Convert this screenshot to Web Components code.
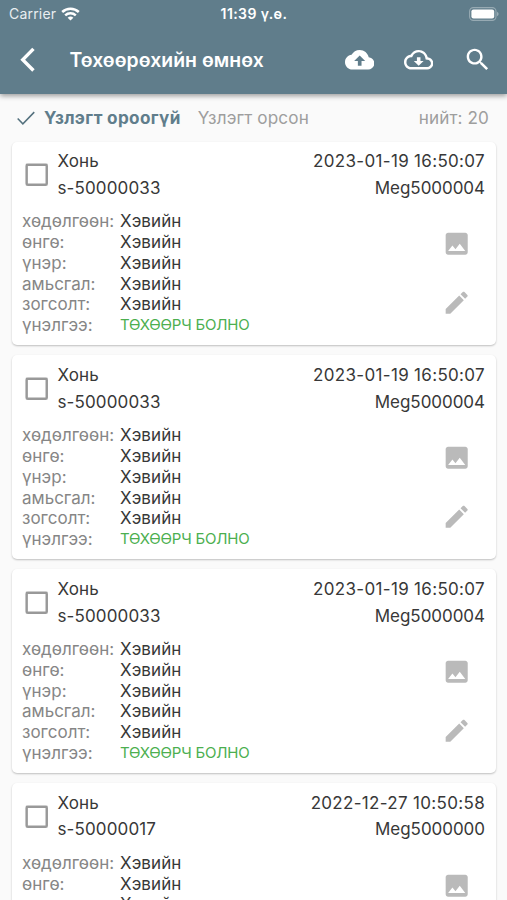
<!DOCTYPE html>
<html lang="mn">
<head>
<meta charset="utf-8">
<meta name="viewport" content="width=device-width, initial-scale=1">
<title>Төхөөрөхийн өмнөх</title>
<style>
    html, body {
        margin: 0;
        height: 100%;
        overflow: hidden;
        background: #fafafa;
        font-family: Inter, "Liberation Sans", sans-serif;
    }
</style>
</head>
<body>
<inspection-page></inspection-page>

<script>
const ICONS = {
    upload: "M19.35 10.04C18.67 6.59 15.64 4 12 4 9.11 4 6.6 5.64 5.35 8.04 2.34 8.36 0 10.91 0 14c0 3.31 2.69 6 6 6h13c2.76 0 5-2.24 5-5 0-2.64-2.05-4.78-4.65-4.96zM13.5 13v4h-3v-4H7.5l4.5-4.5 4.5 4.5h-3z",
    download: "M19.35 10.04C18.67 6.59 15.64 4 12 4 9.11 4 6.6 5.64 5.35 8.04 2.34 8.36 0 10.91 0 14c0 3.31 2.69 6 6 6h13c2.76 0 5-2.24 5-5 0-2.64-2.05-4.78-4.65-4.96zM19 18H6c-2.21 0-4-1.79-4-4 0-2.05 1.53-3.76 3.56-3.97l1.07-.11.5-.95C8.08 7.14 9.94 6 12 6c2.62 0 4.88 1.86 5.39 4.43l.3 1.5 1.53.11C20.78 12.14 22 13.45 22 15c0 1.65-1.35 3-3 3zm-5.55-8h-2.9v3H8l4 4 4-4h-2.55v-3z",
    search: "M15.5 14h-.79l-.28-.27C15.41 12.59 16 11.11 16 9.5 16 5.91 13.09 3 9.5 3S3 5.91 3 9.5 5.91 16 9.5 16c1.61 0 3.09-.59 4.23-1.57l.27.28v.79l5 4.99L20.49 19l-4.99-5zm-6 0C7.01 14 5 11.99 5 9.5S7.01 5 9.5 5 14 7.01 14 9.5 11.99 14 9.5 14z",
    back: "M17.7 4.1 15.7 2.2 6 12l9.7 9.8 2-1.9L9.9 12z",
    check: "M8.6 17.1 3.5 12l-1.2 1.2 6.3 6.3L21.6 6.2 20.4 5z",
    image: "M21 19V5c0-1.1-.9-2-2-2H5c-1.1 0-2 .9-2 2v14c0 1.1.9 2 2 2h14c1.1 0 2-.9 2-2zM8.5 13.5l2.5 3.01L14.5 12l4.5 6H5l3.5-4.5z",
    edit: "M3 17.25V21h3.75L17.81 9.94l-3.75-3.75L3 17.25zM20.71 7.04c.39-.39.39-1.02 0-1.41l-2.34-2.34c-.39-.39-1.02-.39-1.41 0l-1.83 1.83 3.75 3.75 1.83-1.83z",
    box: "M19.2 4.8v14.4H4.8V4.8h14.4m0-2H4.8l-1.6.2-.4 1.8v14.4l.4 1.6 1.6.4h14.4l1.6-.4.4-1.6V4.8L20.8 3z"
};

class AppIcon extends HTMLElement {
    constructor () {
        super();
        this.attachShadow({mode: "open"});
    }

    connectedCallback () {
        this.shadowRoot.innerHTML = `
        <style>
            :host { display: block; flex: none; width: 29.4px; height: 29.4px; }
            svg { display: block; width: 100%; height: 100%; fill: currentColor; }
        </style>
        <svg viewBox="0 0 24 24"><path d="${ICONS[this.getAttribute("name")]}"/></svg>
        `;
    }
}

class StatusBar extends HTMLElement {
    constructor () {
        super();
        this.attachShadow({mode: "open"});
        this.shadowRoot.innerHTML = `
        <style>
            :host {
                display: grid;
                grid-template-columns: 1fr auto 1fr;
                align-items: center;
                height: 26px;
                padding: 1px 8px 0 9px;
                box-sizing: border-box;
                color: #fff;
                font-size: 14px;
                line-height: 17px;
            }
            .left { display: flex; align-items: center; gap: 5px; color: #e9eef1; letter-spacing: .2px; }
            .time { font-size: 14px; font-weight: 600; letter-spacing: .4px; }
            svg { display: block; }
            .battery { justify-self: end; }
        </style>
        <div class="left">
            <span>Carrier</span>
            <svg width="19" height="14" viewBox="0 0 19 14" fill="none" stroke="#fff" stroke-width="2.5">
                <path d="M1.2 5a12 12 0 0 1 16.6 0M4.2 8.4a7.8 7.8 0 0 1 10.6 0"/>
                <path d="M9.5 13.6 6.6 10.8a4.2 4.2 0 0 1 5.8 0z" fill="#fff" stroke="none"/>
            </svg>
        </div>
        <span class="time">11:39 ү.ө.</span>
        <svg class="battery" width="30" height="14" viewBox="0 0 30 14">
            <rect x=".6" y=".6" width="26.4" height="12.8" rx="3.8" fill="none" stroke="#fff" stroke-opacity=".35" stroke-width="1.1"/>
            <rect x="2.4" y="2.4" width="22.8" height="9.2" rx="2.1" fill="#fff"/>
            <path d="M28.2 4.8v4.4c1.8-.7 1.8-3.7 0-4.4z" fill="#fff" fill-opacity=".45"/>
        </svg>
        `;
    }
}

class AppHeader extends HTMLElement {
    constructor () {
        super();
        this.attachShadow({mode: "open"});
        this.shadowRoot.innerHTML = `
        <style>
            :host {
                display: block;
                position: relative;
                height: 93.5px;
                background: #607d8b;
                color: #fff;
                box-shadow: 0 2px 5px rgba(0, 0, 0, .38);
            }
            .bar { display: flex; align-items: center; height: 67.5px; padding: 0 15px 0 13px; }
            h1 { flex: 1; margin: 0 0 0 27px; font-size: 19.4px; line-height: 24px; font-weight: 600; letter-spacing: .05px; white-space: nowrap; }
            .actions { display: flex; gap: 29.4px; }
        </style>
        <status-bar></status-bar>
        <div class="bar">
            <app-icon name="back"></app-icon>
            <h1><slot></slot></h1>
            <div class="actions">
                <app-icon name="upload"></app-icon>
                <app-icon name="download"></app-icon>
                <app-icon name="search"></app-icon>
            </div>
        </div>
        `;
    }
}

class FilterTabs extends HTMLElement {
    constructor () {
        super();
        this.attachShadow({mode: "open"});
        this.shadowRoot.innerHTML = `
        <style>
            :host {
                display: flex;
                align-items: center;
                height: 48px;
                padding: 0 18px 0 15px;
                color: #9e9e9e;
                font-size: 17.14px;
                line-height: 21px;
                letter-spacing: .12px;
                white-space: nowrap;
            }
            app-icon { width: 22px; height: 22px; color: #54717e; }
            .active { margin-left: 7px; color: #607d8b; font-weight: 700; letter-spacing: .33px; }
            .other { margin-left: 17px; }
            .total { margin-left: auto; }
        </style>
        <app-icon name="check"></app-icon>
        <span class="active">Үзлэгт ороогүй</span>
        <span class="other">Үзлэгт орсон</span>
        <span class="total">нийт: <slot></slot></span>
        `;
    }
}

class InspectionCard extends HTMLElement {
    constructor () {
        super();
        this.attachShadow({mode: "open"});
        this.shadowRoot.innerHTML = `
        <style>
            :host {
                display: block;
                box-sizing: border-box;
                height: 203.9px;
                padding: 9.8px 11px 0 10px;
                border-radius: 5px;
                background: #fff;
                box-shadow: 0 1px 2px rgba(0, 0, 0, .24);
                color: #383838;
                font-size: 17px;
                line-height: 20.75px;
                letter-spacing: .08px;
                white-space: nowrap;
            }
            .top { display: flex; align-items: center; }
            .top app-icon { color: #999; }
            .names { margin-left: 6px; letter-spacing: .14px; }
            .right { margin-left: auto; text-align: right; letter-spacing: -.04px; }
            .names, .right { display: grid; gap: 6.1px; }
            .right slot[name=date] { letter-spacing: .32px; }
            .body { display: flex; margin-top: 12.6px; }
            dl { display: grid; grid-template-columns: 98px auto; margin: 0; }
            dt { color: #868686; letter-spacing: 0; }
            dd { margin: 0; }
            .result { color: #4caf50; font-size: 15px; letter-spacing: -.2px; }
            .tools { display: grid; align-content: start; gap: 29.4px; margin: 18px 14px 0 auto; color: #bababa; }
        </style>
        <div class="top">
            <app-icon name="box"></app-icon>
            <div class="names"><slot name="animal"></slot><slot name="code"></slot></div>
            <div class="right"><slot name="date"></slot><slot name="owner"></slot></div>
        </div>
        <div class="body">
            <dl>
                <dt>хөдөлгөөн:</dt><dd>Хэвийн</dd>
                <dt>өнгө:</dt><dd>Хэвийн</dd>
                <dt>үнэр:</dt><dd>Хэвийн</dd>
                <dt>амьсгал:</dt><dd>Хэвийн</dd>
                <dt>зогсолт:</dt><dd>Хэвийн</dd>
                <dt>үнэлгээ:</dt><dd class="result">ТӨХӨӨРЧ БОЛНО</dd>
            </dl>
            <div class="tools">
                <app-icon name="image"></app-icon>
                <app-icon name="edit"></app-icon>
            </div>
        </div>
        `;
    }
}

class InspectionPage extends HTMLElement {
    constructor () {
        super();
        this.attachShadow({mode: "open"});
        const items = [
            ["s-50000033", "2023-01-19 16:50:07", "Meg5000004"],
            ["s-50000033", "2023-01-19 16:50:07", "Meg5000004"],
            ["s-50000033", "2023-01-19 16:50:07", "Meg5000004"],
            ["s-50000017", "2022-12-27 10:50:58", "Meg5000000"]
        ];
        this.shadowRoot.innerHTML = `
        <style>
            :host { display: block; height: 100%; overflow: hidden; }
            .list { display: grid; gap: 9.9px; padding: 0 11px 0 12px; }
        </style>
        <app-header>Төхөөрөхийн өмнөх</app-header>
        <filter-tabs>20</filter-tabs>
        <div class="list">
            ${items.map(([code, date, owner]) => `
            <inspection-card>
                <span slot="animal">Хонь</span>
                <span slot="code">${code}</span>
                <span slot="date">${date}</span>
                <span slot="owner">${owner}</span>
            </inspection-card>`).join("")}
        </div>
        `;
    }
}

customElements.define("app-icon", AppIcon);
customElements.define("status-bar", StatusBar);
customElements.define("app-header", AppHeader);
customElements.define("filter-tabs", FilterTabs);
customElements.define("inspection-card", InspectionCard);
customElements.define("inspection-page", InspectionPage);
</script>
</body>
</html>
